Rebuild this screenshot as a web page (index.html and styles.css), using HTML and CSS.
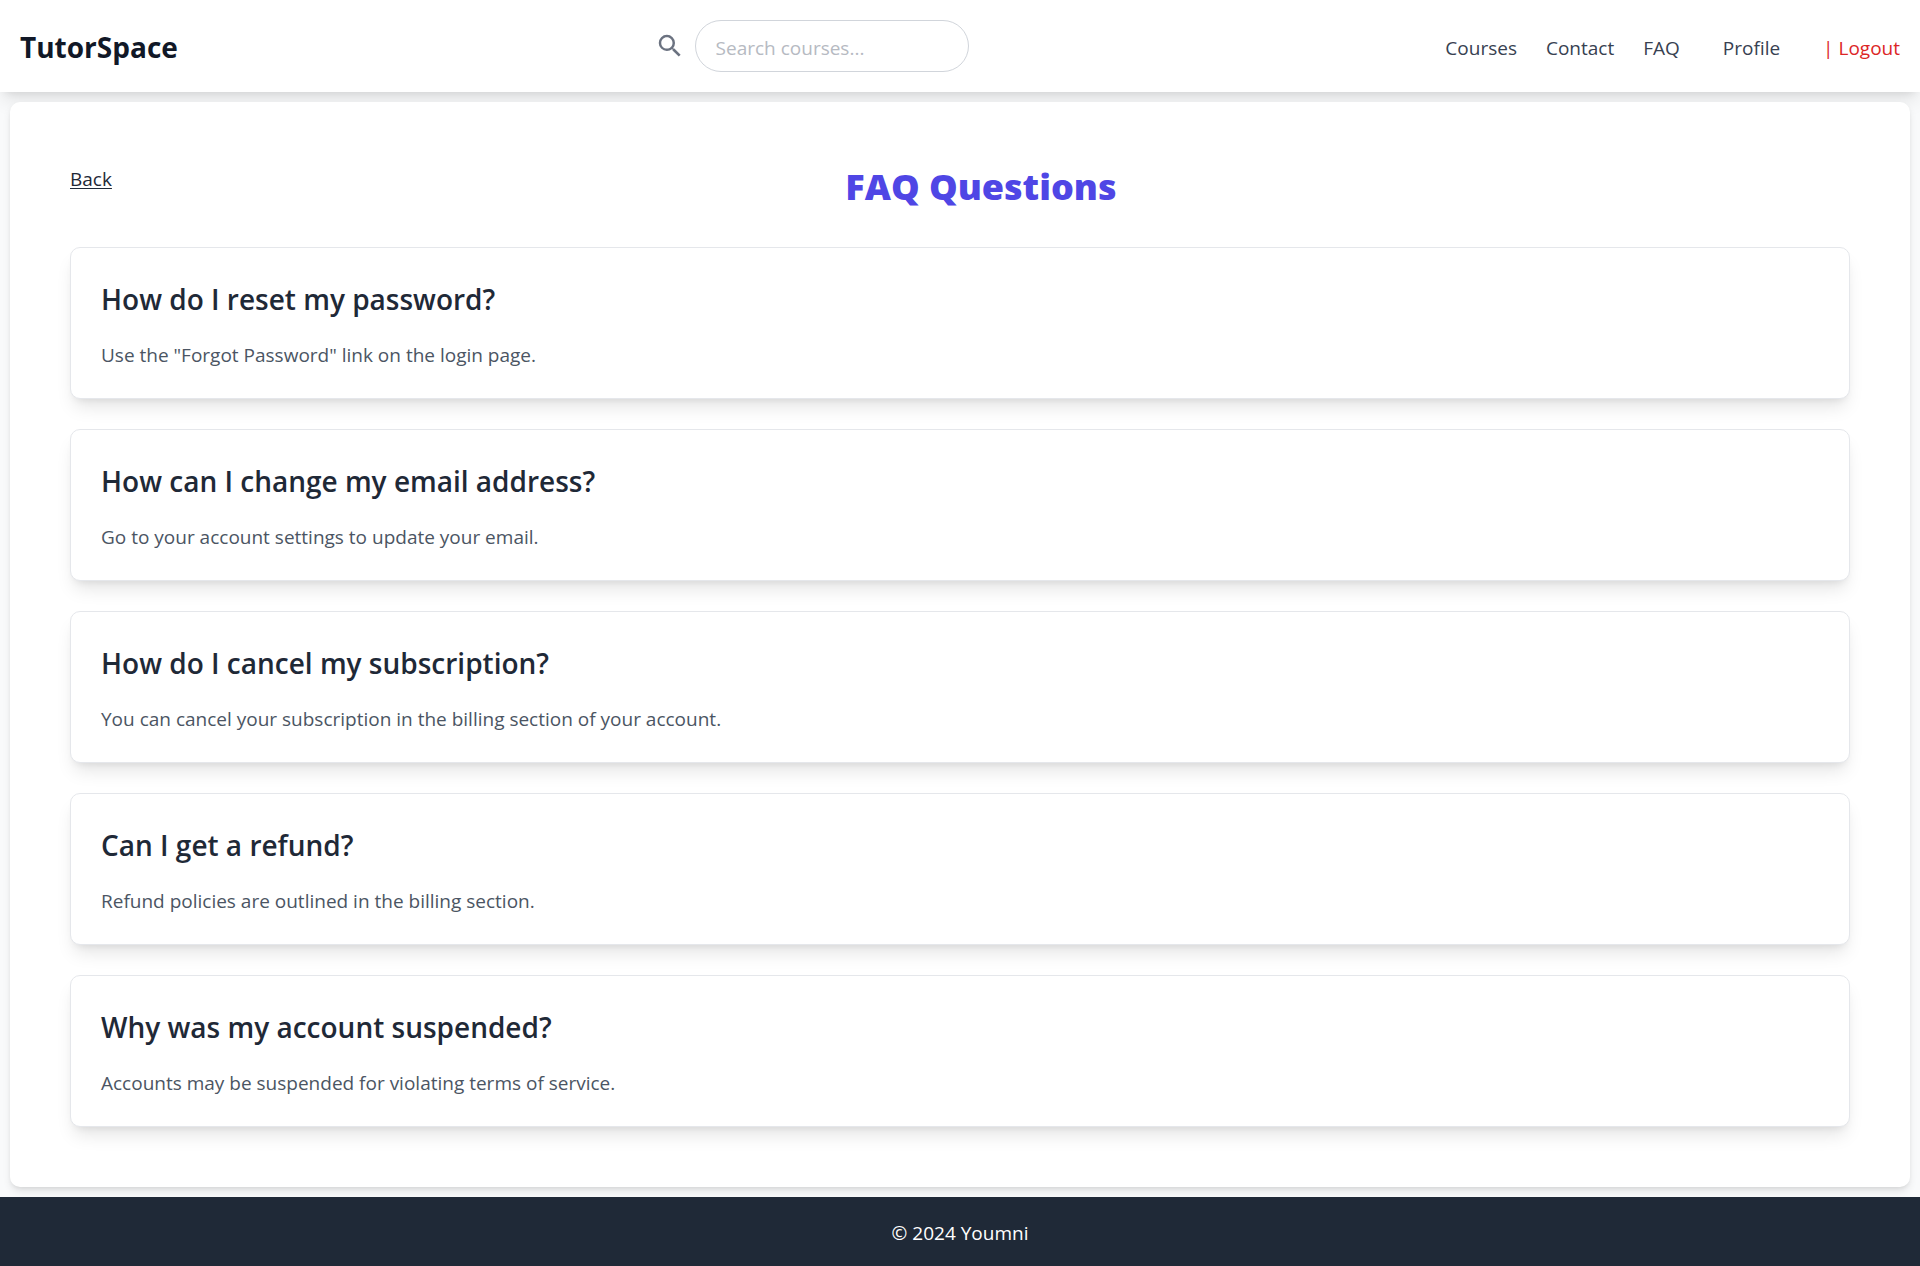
FILE: index.html
```html
<!DOCTYPE html>
<html lang="en">
<head>
  <meta charset="utf-8">
  <meta name="viewport" content="width=device-width, initial-scale=1">
  <title>TutorSpace – FAQ</title>
  <link rel="stylesheet" href="styles.css">
</head>
<body>
  <header class="site-header">
    <a class="brand" href="#">TutorSpace</a>
    <form class="search" role="search">
      <label class="search-label" for="search" aria-label="Search courses">
        <svg class="search-icon" viewBox="0 0 24 24" aria-hidden="true"><path d="M15.5 14h-.79l-.28-.27A6.471 6.471 0 0 0 16 9.5 6.5 6.5 0 1 0 9.5 16c1.61 0 3.09-.59 4.23-1.57l.27.28v.79l5 4.99L20.49 19l-4.99-5zm-6 0C7.01 14 5 11.99 5 9.5S7.01 5 9.5 5 14 7.01 14 9.5 11.99 14 9.5 14z"/></svg>
      </label>
      <input class="search-input" id="search" type="text" placeholder="Search courses...">
    </form>
    <nav class="site-nav">
      <div class="nav-links">
        <a href="#">Courses</a>
        <a href="#">Contact</a>
        <a href="#">FAQ</a>
      </div>
      <a href="#">Profile</a>
      <button class="logout" type="button">| Logout</button>
    </nav>
  </header>

  <main class="panel">
    <div class="panel-head">
      <a class="back" href="#">Back</a>
      <h1 class="panel-title">FAQ Questions</h1>
    </div>
    <div class="faq-list">
      <article class="faq">
        <h2 class="faq-question">How do I reset my password?</h2>
        <p class="faq-answer">Use the "Forgot Password" link on the login page.</p>
      </article>
      <article class="faq">
        <h2 class="faq-question">How can I change my email address?</h2>
        <p class="faq-answer">Go to your account settings to update your email.</p>
      </article>
      <article class="faq">
        <h2 class="faq-question">How do I cancel my subscription?</h2>
        <p class="faq-answer">You can cancel your subscription in the billing section of your account.</p>
      </article>
      <article class="faq">
        <h2 class="faq-question">Can I get a refund?</h2>
        <p class="faq-answer">Refund policies are outlined in the billing section.</p>
      </article>
      <article class="faq">
        <h2 class="faq-question">Why was my account suspended?</h2>
        <p class="faq-answer">Accounts may be suspended for violating terms of service.</p>
      </article>
    </div>
  </main>

  <footer class="site-footer">© 2024 Youmni</footer>
</body>
</html>
```
FILE: styles.css
```css
*, *::before, *::after { box-sizing: border-box; }

body {
  margin: 0;
  min-height: 100vh;
  display: flex;
  flex-direction: column;
  background: #f9fafb;
  color: #1f2937;
  font-family: "Open Sans", "Noto Sans", sans-serif;
  font-size: 19px;
  line-height: 30px;
}

a { color: inherit; text-decoration: none; }
h1, h2, p { margin: 0; }

.site-header {
  display: flex;
  align-items: center;
  justify-content: space-between;
  padding: 20px;
  background: #fff;
  box-shadow: 0 12px 18px -4px rgba(0, 0, 0, 0.1), 0 5px 8px -5px rgba(0, 0, 0, 0.1);
}

.brand {
  padding-top: 2px;
  color: #111827;
  font-size: 28px;
  font-weight: 700;
  line-height: 40px;
}

.search { display: flex; align-items: center; gap: 10px; }
.search-label { display: flex; }
.search-icon { width: 30px; height: 30px; fill: #6b7280; }

.search-input {
  width: 274px;
  height: 52px;
  padding: 12px 20px 8px;
  border: 1px solid #d1d5db;
  border-radius: 26px;
  background: #fff;
  color: #1f2937;
  font: inherit;
}
.search-input::placeholder { color: #b6bac2; opacity: 1; }

.site-nav {
  display: flex;
  align-items: center;
  gap: 43px;
  padding-top: 4px;
  color: #374151;
}
.nav-links { display: flex; gap: 29px; }

.logout {
  padding: 0;
  border: 0;
  background: none;
  color: #dc2626;
  font: inherit;
  cursor: pointer;
}

.panel {
  flex: 1;
  margin: 10px;
  padding: 60px;
  border-radius: 10px;
  background: #fff;
  box-shadow: 0 5px 8px -1px rgba(0, 0, 0, 0.1), 0 2px 5px -2px rgba(0, 0, 0, 0.1);
}

.panel-head {
  display: flex;
  align-items: flex-start;
  padding-top: 2px;
  margin-bottom: 38px;
}
.back { text-decoration: underline; text-underline-offset: 2px; }

.panel-title {
  flex: 1;
  color: #4f46e5;
  font-size: 36px;
  font-weight: 800;
  line-height: 45px;
  text-align: center;
}

.faq-list { display: flex; flex-direction: column; gap: 30px; }

.faq {
  padding: 31px 30px 28px;
  border: 1px solid #e5e7eb;
  border-radius: 10px;
  background: #fff;
  box-shadow: 0 12px 18px -4px rgba(0, 0, 0, 0.1), 0 5px 8px -5px rgba(0, 0, 0, 0.1);
}
.faq-question {
  margin-bottom: 21px;
  font-size: 28px;
  font-weight: 600;
  line-height: 40px;
}
.faq-answer { color: #4b5563; }

.site-footer {
  padding: 21px 20px 18px;
  background: #1f2937;
  color: #fff;
  text-align: center;
}
```
